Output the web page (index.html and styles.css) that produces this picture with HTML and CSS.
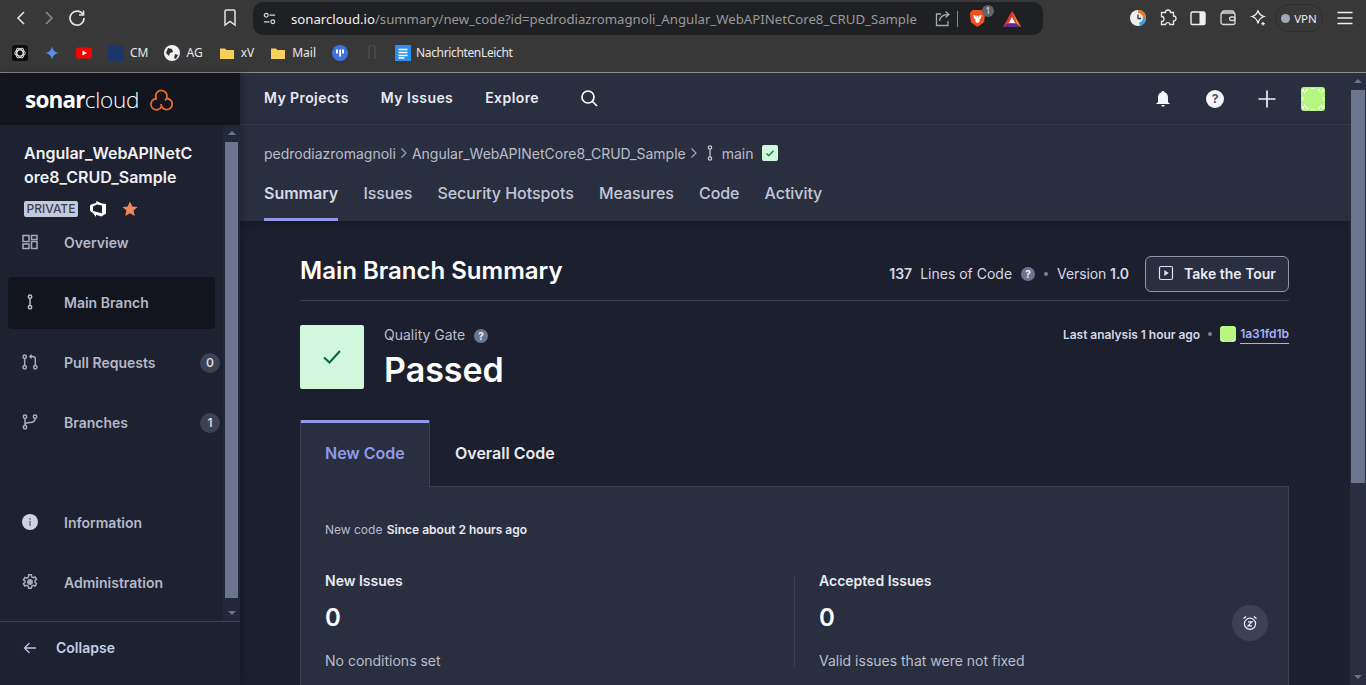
FILE: index.html
```html
<!DOCTYPE html>
<html lang="en">

<head>
  <meta charset="UTF-8">
  <meta name="viewport" content="width=device-width, initial-scale=1.0">
  <title>SonarCloud - Main Branch Summary</title>
  <link rel="stylesheet" href="styles.css">
</head>

<body>
  <!-- browser chrome -->
  <div class="browser">
    <div class="toolbar">
      <svg class="tool-btn" viewBox="0 0 28 28" fill="none" stroke="#e4e4e4" stroke-width="1.6"><path d="M17 8l-6 6 6 6" /></svg>
      <svg class="tool-btn" viewBox="0 0 28 28" fill="none" stroke="#8a8a8a" stroke-width="1.6"><path d="M11 8l6 6-6 6" /></svg>
      <svg class="tool-btn" viewBox="0 0 28 28" fill="none" stroke="#e4e4e4" stroke-width="1.6"><path d="M20 10.5A7 7 0 1 0 21 14" /><path d="M20.5 6.5v4.5H16" /></svg>
      <svg class="tool-btn bookmark-btn" viewBox="0 0 28 28" fill="none" stroke="#e4e4e4" stroke-width="1.5"><path d="M9 7.5a1.5 1.5 0 0 1 1.5-1.5h7a1.5 1.5 0 0 1 1.5 1.5V21l-5-3.5L9 21z" /></svg>
      <div class="address">
        <svg class="site-icon" viewBox="0 0 16 16" fill="none" stroke="#d8d8d8" stroke-width="1.3"><circle cx="4.5" cy="4.5" r="2" /><path d="M8 4.5h6M2 11.5h6" /><circle cx="11.5" cy="11.5" r="2" /></svg>
        <span class="url"><span class="url-host">sonarcloud.io</span>/summary/new_code?id=pedrodiazromagnoli_Angular_WebAPINetCore8_CRUD_Sample</span>
        <svg class="addr-icon share" viewBox="0 0 18 18" fill="none" stroke="#a8a8a8" stroke-width="1.3"><path d="M7 4H2.5v11.5H14V11" /><path d="M5.5 11c.5-4 3.5-6.5 9-6.5M11.5 1.5l3.5 3-3.5 3" /></svg>
        <span class="addr-sep"></span>
        <span class="brave">
          <svg viewBox="0 0 18 20" width="17" height="19"><path fill="#f1501f" d="M4 1h10l3 3-1 10-7 5-7-5L1 4z" /><path fill="#fff" d="M4.500 6l3 1h3l3-1-1 4-1.500 1 .5 2-2.500 2-2.500-2 .5-2-1.500-1z" /><path fill="#f1501f" d="M6.500 8h1.500v1.500zM11.500 8H10v1.500z" /></svg>
          <span class="brave-count">1</span>
        </span>
        <svg class="addr-icon rewards" viewBox="0 0 18 16"><path fill="#e2352e" d="M9 0l9 16H0z" /><path fill="#f08a2c" d="M9 0l9 16h-3z" /><path fill="#5f2a8f" d="M0 16l4-3h10l4 3z" /><path fill="#fff" d="M9 6l3.200 6H5.800z" /></svg>
      </div>
      <div class="tool-right">
        <svg class="ext" viewBox="0 0 18 18"><circle cx="9" cy="9" r="8" fill="#eee" /><path d="M9 1a8 8 0 0 1 8 8h-3a5 5 0 0 0-5-5z" fill="#e8742a" /><path d="M17 9a8 8 0 0 1-6 7.7l-1-3a5 5 0 0 0 4-4.700z" fill="#3aa0d8" /><path d="M9 5.500V9.500h3" fill="none" stroke="#334" stroke-width="1.300" /></svg>
        <svg class="ext" viewBox="0 0 18 18" fill="none" stroke="#e6e6e6" stroke-width="1.300"><path d="M6.500 3.500a2.500 2.500 0 0 1 5 0h3v3.500a2.500 2.500 0 0 1 0 5V15.500h-3.500a2.300 2.300 0 0 0-4.500 0H2.500v-3a2.500 2.500 0 0 0 0-5v-4z" /></svg>
        <svg class="ext" viewBox="0 0 18 18"><rect x="2" y="3" width="14" height="12.500" rx="1.500" fill="none" stroke="#efefef" stroke-width="1.400" /><rect x="10.500" y="3" width="5.500" height="12.500" fill="#efefef" /></svg>
        <svg class="ext" viewBox="0 0 18 18" fill="none" stroke="#dcdcdc" stroke-width="1.300"><rect x="2" y="4" width="14" height="11.500" rx="2" /><path d="M3 4c0-1.500 1-2 2-2h8c1 0 2 .5 2 2" /><rect x="10.500" y="8" width="5.500" height="3.500" rx="1.700" /></svg>
        <svg class="ext" viewBox="0 0 18 18" fill="none" stroke="#eee" stroke-width="1.300"><path d="M9 1.500c.8 3.500 2.500 5 6 6-3.500 1-5.200 2.500-6 7-.8-4.500-2.500-6-6-7 3.500-1 5.200-2.500 6-6z" /><path d="M14 13v3.500M12.300 14.700h3.500" /></svg>
        <div class="vpn"><span class="vpn-dot"></span>VPN</div>
        <svg class="ext menu" viewBox="0 0 18 18" stroke="#efefef" stroke-width="1.400"><path d="M1.500 3.500h15M1.500 9h15M1.500 14.500h15" /></svg>
      </div>
    </div>
    <div class="bookmarks">
      <div class="bm"><svg class="bm-icon" viewBox="0 0 16 16" fill="none"><rect width="16" height="16" rx="3" fill="#0b0b0b" /><g stroke="#ddd" stroke-width="1.100"><ellipse cx="8" cy="8" rx="5.200" ry="3" /><ellipse cx="8" cy="8" rx="5.200" ry="3" transform="rotate(60 8 8)" /><ellipse cx="8" cy="8" rx="5.200" ry="3" transform="rotate(120 8 8)" /></g></svg></div>
      <div class="bm"><svg class="bm-icon" viewBox="0 0 16 16"><path fill="#5b8def" d="M8 1c.6 4 2.500 6.200 7 7-4.500.8-6.400 3-7 7-.6-4-2.500-6.200-7-7 4.500-.8 6.400-3 7-7z" /></svg></div>
      <div class="bm"><svg class="bm-icon" viewBox="0 0 16 16"><rect y="2.500" width="16" height="11" rx="3" fill="#f00" /><path fill="#fff" d="M6.500 5.500v5L11 8z" /></svg></div>
      <div class="bm"><span class="bm-square"></span>CM</div>
      <div class="bm"><svg class="bm-icon" viewBox="0 0 16 16"><circle cx="8" cy="8" r="8" fill="#f2f2f2" /><path fill="#333" d="M4 3l4 1 1 3-3 1-1 3-3-3zM11 9l3 1-2 4-2-1z" /></svg>AG</div>
      <div class="bm"><svg class="bm-icon" viewBox="0 0 16 16"><path fill="#f6cf5c" d="M1 3.500h5l1.500 1.500H15v9H1z" /></svg>xV</div>
      <div class="bm"><svg class="bm-icon" viewBox="0 0 16 16"><path fill="#f6cf5c" d="M1 3.500h5l1.500 1.500H15v9H1z" /></svg>Mail</div>
      <div class="bm"><svg class="bm-icon" viewBox="0 0 16 16"><circle cx="8" cy="8" r="8" fill="#3d73e0" /><path fill="#fff" d="M4 4.500h2v4H4zM7.200 4.500h1.800v7H7.200zM10 4.500h2v4h-2z" /></svg></div>
      <div class="bm"><svg class="bm-icon" viewBox="0 0 16 16" fill="none" stroke="#4c4c4c" stroke-width="1.500"><path d="M5 14V3a3 3 0 0 1 6 0v11" /></svg></div>
      <div class="bm bm-long"><svg class="bm-icon" viewBox="0 0 16 16"><rect width="16" height="16" fill="#2b8ef0" /><path stroke="#fff" stroke-width="1.500" d="M3.500 4.500h9M3.500 7.500h9M3.500 10.500h9M3.500 13h6" /></svg>NachrichtenLeicht</div>
    </div>
  </div>

  <div class="app">
    <!-- left column -->
    <aside class="sidebar">
      <div class="logo-bar">
        <span class="logo-text"><b>sonar</b>cloud</span>
        <svg class="logo-cloud" viewBox="0 0 24 23" fill="none" stroke="#e8692c" stroke-width="1.800"><path d="M7.500 11.200A5.700 5.700 0 1 1 16 12.500" /><path d="M17.700 10.500A5.600 5.600 0 1 1 12 16" /><path d="M12.500 18.500A5.500 5.500 0 1 1 8 10.800" /></svg>
      </div>
      <div class="side-scroll">
        <div class="side-inner">
          <div class="project">
            <h1 class="project-name">Angular_WebAPINetCore8_CRUD_Sample</h1>
            <div class="project-meta">
              <span class="private">PRIVATE</span>
              <svg class="devops" viewBox="0 0 16 16"><path fill="#fff" fill-rule="evenodd" d="M16 3v9.500L11.500 15.500 6 13.800V16L2.500 11.500 1 11 0 9V5l1-1.500L6.200 2V0L12 2.600zM3 5.500v4.500l9 2.300V4.500L7 3.500z" /></svg>
              <svg class="star" viewBox="0 0 16 16"><path fill="#f0875a" d="M8 .5l2.300 5 5.200.6-3.900 3.500 1.100 5.400L8 12.300 3.300 15l1.100-5.400L.5 6.100l5.200-.6z" /></svg>
            </div>
          </div>
          <nav class="side-nav">
            <a class="side-item">
              <svg class="side-icon" viewBox="0 0 16 16" fill="none" stroke="#a6abbd" stroke-width="1.500"><rect x="1" y="1.500" width="6" height="6" /><rect x="9.500" y="1.500" width="5.500" height="4" /><rect x="1" y="10" width="6" height="4.500" /><rect x="9.500" y="7.500" width="5.500" height="7" /></svg>
              Overview
            </a>
            <a class="side-item side-item-active">
              <svg class="side-icon" viewBox="0 0 16 16" fill="none" stroke="#b9bdcc" stroke-width="1.500"><circle cx="8" cy="2.700" r="1.700" /><circle cx="8" cy="13.300" r="1.700" /><path d="M8 4.400v7.200" /></svg>
              Main Branch
            </a>
            <a class="side-item">
              <svg class="side-icon" viewBox="0 0 16 16" fill="none" stroke="#a6abbd" stroke-width="1.500"><circle cx="2.700" cy="2.700" r="1.700" /><circle cx="2.700" cy="13.300" r="1.700" /><circle cx="13.300" cy="13.300" r="1.700" /><path d="M2.700 4.400v7.200M13.300 11.600V5a2.500 2.500 0 0 0-2.500-2.500H8M9.700.8L8 2.500l1.700 1.700" /></svg>
              Pull Requests
              <span class="count">0</span>
            </a>
            <a class="side-item">
              <svg class="side-icon" viewBox="0 0 16 16" fill="none" stroke="#a6abbd" stroke-width="1.500"><circle cx="3" cy="2.700" r="1.700" /><circle cx="3" cy="13.300" r="1.700" /><circle cx="13" cy="2.700" r="1.700" /><path d="M3 4.400v7.200M13 4.400c0 3-2 4-5 4.100-3 .1-5 1-5 3" /></svg>
              Branches
              <span class="count">1</span>
            </a>
            <a class="side-item side-item-spaced">
              <svg class="side-icon" viewBox="0 0 16 16"><circle cx="8" cy="8" r="8" fill="#cdd1e0" /><path fill="#767b90" d="M7.200 7h1.600v5H7.200zM7.200 4h1.600v1.700H7.200z" /></svg>
              Information
            </a>
            <a class="side-item">
              <svg class="side-icon" viewBox="0 0 16 16" fill="none" stroke="#a6abbd" stroke-width="1.500"><path d="M6.700.8h2.600l.4 2 1.600.9 1.900-.7 1.300 2.300-1.500 1.300v1.800l1.500 1.300-1.300 2.300-1.900-.7-1.600.9-.4 2H6.700l-.4-2-1.600-.9-1.900.7-1.300-2.300 1.500-1.300V7.100L1.500 5.800l1.300-2.300 1.900.7 1.600-.9z" /><circle cx="8" cy="8" r="2.200" fill="#a6abbd" /></svg>
              Administration
            </a>
          </nav>
        </div>
        <div class="scrollbar scrollbar-side">
          <span class="arrow-up"></span>
          <span class="thumb thumb-side"></span>
          <span class="arrow-down"></span>
        </div>
      </div>
      <div class="collapse">
        <svg class="collapse-icon" viewBox="0 0 14 14" fill="none" stroke="#b9c8e4" stroke-width="1.300"><path d="M13 7H1.500M6.500 2l-5 5 5 5" /></svg>
        Collapse
      </div>
    </aside>

    <!-- right column -->
    <div class="main">
      <header class="topbar">
        <a class="top-link">My Projects</a>
        <a class="top-link">My Issues</a>
        <a class="top-link">Explore</a>
        <svg class="search" viewBox="0 0 18 18" fill="none" stroke="#fff" stroke-width="1.700"><circle cx="8" cy="8" r="6" /><path d="M12.500 12.500l4.500 4.500" /></svg>
        <div class="top-right">
          <svg class="top-icon" viewBox="0 0 18 18"><path fill="#f4f6fb" d="M9 1c.9 0 1.500.6 1.500 1.300C13 3 14 5 14 7.500V12l2 2H2l2-2V7.500C4 5 5 3 7.500 2.300 7.500 1.600 8.100 1 9 1zM7.300 15h3.400a1.700 1.700 0 0 1-3.400 0z" /></svg>
          <span class="help-big">?</span>
          <svg class="top-icon" viewBox="0 0 18 18" stroke="#eef0f6" stroke-width="1.700"><path d="M9 .5v17M.5 9h17" /></svg>
          <svg class="avatar" viewBox="0 0 24 24"><rect width="24" height="24" rx="3" fill="#b6f57f" /><path fill="#eafcdc" d="M1 2h2v2h2V2h3v1H6v2H4v2H3V5H1zM23 2h-2v2h-2V2h-3v1h2v2h2v2h1V5h2zM1 22h2v-2h2v2h3v-1H6v-2H4v-2H3v2H1zM23 22h-2v-2h-2v2h-3v-1h2v-2h2v-2h1v2h2zM1 10h2v1H2v3H1zM23 10h-2v1h1v3h1zM10 1h4v1h-4zM10 22h4v1h-4z" /></svg>
        </div>
      </header>

      <section class="project-head">
        <div class="crumbs">
          <span>pedrodiazromagnoli</span>
          <svg class="crumb-sep" viewBox="0 0 8 12" fill="none" stroke="#a6abbd" stroke-width="1.100"><path d="M1.500 1.500L6 6l-4.500 4.500" /></svg>
          <span>Angular_WebAPINetCore8_CRUD_Sample</span>
          <svg class="crumb-sep" viewBox="0 0 8 12" fill="none" stroke="#a6abbd" stroke-width="1.100"><path d="M1.500 1.500L6 6l-4.500 4.500" /></svg>
          <svg class="crumb-branch" viewBox="0 0 8 16" fill="none" stroke="#c9cdda" stroke-width="1.200"><circle cx="4" cy="2.500" r="1.700" /><circle cx="4" cy="13.500" r="1.700" /><path d="M4 4.200v7.600" /></svg>
          <span>main</span>
          <span class="crumb-ok"><svg viewBox="0 0 10 10" fill="none" stroke="#0a7a3e" stroke-width="1.300" width="10" height="10"><path d="M1.500 5.500l2.300 2.200 4.700-5" /></svg></span>
        </div>
        <nav class="project-tabs">
          <a class="project-tab project-tab-active">Summary</a>
          <a class="project-tab">Issues</a>
          <a class="project-tab">Security Hotspots</a>
          <a class="project-tab">Measures</a>
          <a class="project-tab">Code</a>
          <a class="project-tab">Activity</a>
        </nav>
      </section>

      <div class="scroll-area">
        <main class="content">
          <div class="summary-head">
            <h2 class="summary-title">Main Branch Summary</h2>
            <div class="summary-meta">
              <b class="loc">137</b>
              <span class="loc-label">Lines of Code</span>
              <span class="help-small">?</span>
              <span class="dot"></span>
              <span class="version-label">Version <b class="version">1.0</b></span>
              <button class="tour" type="button">
                <svg viewBox="0 0 16 16" width="16" height="16" fill="none" stroke="#dfe2ec" stroke-width="1.200"><rect x="1.500" y="1.500" width="13" height="13" rx="1.500" /><path d="M6.300 5v6l4.500-3z" fill="#dfe2ec" stroke="none" /></svg>
                Take the Tour
              </button>
            </div>
          </div>

          <div class="gate-row">
            <div class="gate-box"><svg viewBox="0 0 20 16" width="20" height="16" fill="none" stroke="#0b6b3a" stroke-width="2.200"><path d="M2 8.500l5.500 5L18 2" /></svg></div>
            <div class="gate-text">
              <div class="gate-label">Quality Gate <span class="help-small">?</span></div>
              <div class="gate-value">Passed</div>
            </div>
            <div class="analysis">
              <span>Last analysis 1 hour ago</span>
              <span class="dot"></span>
              <svg class="avatar-small" viewBox="0 0 16 16"><rect width="16" height="16" rx="3" fill="#b6f57f" /><path fill="#d8f9bd" d="M1 1h3v1H2v2H1zM12 1h3v3h-1V2h-2zM1 12h1v2h2v1H1zM14 12h1v3h-3v-1h2z" /></svg>
              <a class="commit">1a31fd1b</a>
            </div>
          </div>

          <div class="code-tabs">
            <a class="code-tab code-tab-active">New Code</a>
            <a class="code-tab">Overall Code</a>
          </div>

          <div class="panel">
            <p class="since">New code <b>Since about 2 hours ago</b></p>
            <div class="measures">
              <div class="measure">
                <div class="measure-label">New Issues</div>
                <div class="measure-value">0</div>
                <div class="measure-note">No conditions set</div>
              </div>
              <div class="measure measure-right">
                <div>
                  <div class="measure-label">Accepted Issues</div>
                  <div class="measure-value">0</div>
                  <div class="measure-note">Valid issues that were not fixed</div>
                </div>
                <span class="alarm">
                  <svg viewBox="0 0 16 16" width="16" height="16" fill="none" stroke="#f0f2f8" stroke-width="1.200"><circle cx="8" cy="8.800" r="5.600" /><path d="M1.500 3.500l2.500-2M14.500 3.500l-2.500-2" /><path d="M6 6.800h4l-4 4h4" /></svg>
                </span>
              </div>
            </div>
          </div>
        </main>
        <div class="scrollbar scrollbar-page">
          <span class="arrow-up"></span>
          <span class="thumb thumb-page"></span>
          <span class="arrow-down"></span>
        </div>
      </div>
    </div>
  </div>
</body>

</html>
```

FILE: styles.css
```css
* {
  box-sizing: border-box;
}

html,
body {
  height: 100%;
}

body {
  margin: 0;
  overflow: hidden;
  display: flex;
  flex-direction: column;
  font-family: Inter, "Liberation Sans", sans-serif;
  background-color: #1c1f2e;
  color: #e8eaf2;
}

/* browser chrome */
.browser {
  height: 73px;
  flex: none;
  background-color: #383838;
  border-bottom: 1px solid #8a8a8a;
  font-family: "Noto Sans", "Liberation Sans", sans-serif;
}

.toolbar {
  height: 36px;
  display: flex;
  align-items: center;
  padding-left: 7px;
}

.tool-btn {
  width: 28px;
  height: 28px;
  flex: none;
}

.bookmark-btn {
  margin-left: 125px;
}

.address {
  width: 790px;
  height: 33px;
  margin-left: 9px;
  margin-top: 1px;
  padding: 0 17px 0 9px;
  display: flex;
  align-items: center;
  background-color: #1f2023;
  border-radius: 10px;
}

.site-icon {
  width: 15px;
  height: 15px;
  flex: none;
}

.url {
  margin-left: 14px;
  font-size: 13.2px;
  color: #9a9a9a;
  white-space: nowrap;
  width: 626px;
  flex: none;
}

.url-host {
  color: #f2f2f2;
}

.addr-icon {
  flex: none;
}

.share {
  width: 18px;
  height: 18px;
  margin-left: 17px;
}

.addr-sep {
  width: 1px;
  height: 16px;
  margin-left: 5px;
  background-color: #8a8a8a;
}

.brave {
  display: flex;
  margin-left: 11px;
  position: relative;
}

.brave-count {
  position: absolute;
  top: -4px;
  right: -8px;
  width: 12px;
  height: 12px;
  border-radius: 50%;
  background-color: #62646c;
  color: #e8e8e8;
  font-size: 8px;
  line-height: 12px;
  text-align: center;
}

.rewards {
  width: 18px;
  height: 16px;
  margin-left: 17px;
}

.tool-right {
  margin-left: 86px;
  display: flex;
  align-items: center;
}

.ext {
  width: 18px;
  height: 18px;
  flex: none;
  margin-right: 12px;
}

.vpn {
  width: 48px;
  height: 28px;
  margin-left: -4px;
  display: flex;
  align-items: center;
  justify-content: center;
  gap: 4px;
  border: 1px solid #2d2d2d;
  border-radius: 14px;
  font-size: 11.5px;
  color: #ececec;
}

.vpn-dot {
  width: 9px;
  height: 9px;
  border-radius: 50%;
  background-color: #a0a6b8;
}

.menu {
  margin: 0 0 0 13px;
}

.bookmarks {
  height: 34px;
  padding-left: 12px;
  display: flex;
  align-items: center;
  gap: 16px;
  font-size: 12px;
  line-height: 16px;
  color: #e8e8e8;
}

.bm {
  display: flex;
  align-items: center;
  gap: 6px;
}

.bm-long {
  gap: 5px;
  margin-left: -1px;
  letter-spacing: -0.35px;
}

.bm-icon {
  width: 16px;
  height: 16px;
  flex: none;
}

.bm-square {
  width: 16px;
  height: 16px;
  background-color: #1b3768;
}

/* app frame */
.app {
  flex: 1;
  min-height: 0;
  display: flex;
}

.sidebar {
  width: 240px;
  flex: none;
  display: flex;
  flex-direction: column;
  background-color: #1e2130;
  box-shadow: 2px 0 8px rgba(0, 0, 0, 0.25);
  z-index: 2;
}

.logo-bar {
  height: 52px;
  flex: none;
  padding-left: 25px;
  display: flex;
  align-items: center;
  gap: 10px;
  background-color: #12151e;
}

.logo-text {
  font-family: "Open Sans", "Liberation Sans", sans-serif;
  font-size: 22.5px;
  font-weight: 300;
  letter-spacing: -0.25px;
  color: #fff;
}

.logo-text b {
  font-weight: 700;
  letter-spacing: -0.8px;
}

.logo-cloud {
  width: 24px;
  height: 23px;
}

.side-scroll {
  flex: 1;
  min-height: 0;
  display: flex;
  border-bottom: 1px solid #3c4154;
}

.side-inner {
  flex: 1;
  min-width: 0;
}

.project {
  padding: 16px 26px 0 24px;
}

.project-name {
  margin: 0;
  font-size: 16px;
  line-height: 24px;
  font-weight: 600;
  color: #eef0f6;
  word-break: break-all;
}

.project-meta {
  height: 16px;
  margin-top: 12px;
  display: flex;
  align-items: center;
}

.private {
  height: 16px;
  padding: 0 2.5px;
  background-color: #c5cadb;
  border-radius: 2px;
  color: #3a3f52;
  font-size: 12px;
  line-height: 16px;
  font-weight: 500;
}

.devops {
  width: 16px;
  height: 16px;
  margin-left: 12px;
}

.star {
  width: 16px;
  height: 16px;
  margin-left: 16px;
}

.side-nav {
  padding: 0 0 0 8px;
}

.side-item {
  width: 207px;
  height: 52px;
  margin-bottom: 8px;
  padding: 0 0 2px 14px;
  display: flex;
  align-items: center;
  font-size: 14px;
  font-weight: 600;
  color: #b4b8c8;
  border-radius: 4px;
  white-space: nowrap;
}

.side-item-active {
  background-color: #12151e;
}

.side-item-spaced {
  margin-top: 48px;
}

.side-icon {
  width: 16px;
  height: 16px;
  flex: none;
  margin-right: 26px;
}

.count {
  width: 20px;
  height: 20px;
  margin: 2px -5px 0 auto;
  border-radius: 50%;
  background-color: #3c4154;
  color: #d5d8e4;
  font-size: 12px;
  line-height: 20px;
  text-align: center;
  flex: none;
}

/* fake scrollbars, the screenshot shows the native ones */
.scrollbar {
  flex: none;
  display: flex;
  flex-direction: column;
  align-items: center;
  width: 17px;
  background-color: #23273a;
}

.arrow-up,
.arrow-down {
  width: 0;
  height: 0;
  flex: none;
  border-left: 4px solid transparent;
  border-right: 4px solid transparent;
}

.arrow-up {
  margin-top: 6px;
  border-bottom: 4px solid #6b7590;
}

.arrow-down {
  margin-top: auto;
  margin-bottom: 6px;
  border-top: 4px solid #6b7590;
}

.thumb {
  width: 13px;
  background-color: #6b7590;
}

.thumb-side {
  height: 456px;
  margin-top: 7px;
}

.thumb-page {
  height: 393px;
  margin-top: 7px;
  width: 14px;
}

.scrollbar-page {
  width: 16px;
  margin-top: -148px;
  background-color: #2a2f40;
  z-index: 3;
}

.collapse {
  height: 63px;
  flex: none;
  padding: 0 0 12px 23px;
  display: flex;
  align-items: center;
  gap: 19px;
  font-size: 14px;
  font-weight: 600;
  color: #c3cfe6;
}

.collapse-icon {
  width: 14px;
  height: 14px;
}

/* main column */
.main {
  flex: 1;
  min-width: 0;
  display: flex;
  flex-direction: column;
}

.topbar {
  height: 52px;
  flex: none;
  padding: 0 41px 0 24px;
  display: flex;
  align-items: center;
  gap: 32px;
  background-color: #2a2f40;
  border-bottom: 1px solid #3c4154;
}

.top-link {
  padding-bottom: 3px;
  font-size: 14px;
  font-weight: 600;
  letter-spacing: 0.42px;
  color: #e8eaf5;
}

.search {
  width: 18px;
  height: 18px;
  margin-left: 9px;
  margin-bottom: 1px;
}

.top-right {
  margin-left: auto;
  display: flex;
  align-items: center;
}

.top-icon {
  width: 18px;
  height: 18px;
  flex: none;
}

.help-big {
  width: 18px;
  height: 18px;
  margin: 0 34px;
  border-radius: 50%;
  background-color: #f4f6fb;
  color: #4a5068;
  font-size: 12px;
  font-weight: 700;
  line-height: 18px;
  text-align: center;
}

.avatar {
  width: 24px;
  height: 24px;
  margin-left: 25px;
}

.project-head {
  height: 96px;
  flex: none;
  padding: 16px 24px 0;
  margin-right: 16px;
  background-color: #2a2f40;
  box-shadow: 0 2px 10px rgba(0, 0, 0, 0.3);
  z-index: 1;
}

.crumbs {
  height: 24px;
  display: flex;
  align-items: center;
  font-size: 14px;
  color: #b9bdcc;
}

.crumb-sep {
  width: 8px;
  height: 12px;
  margin: 0 4px 0 4px;
}

.crumb-branch {
  width: 8px;
  height: 16px;
  margin: 0 8px 0 4px;
}

.crumb-ok {
  width: 16px;
  height: 16px;
  margin-left: 8px;
  display: flex;
  align-items: center;
  justify-content: center;
  background-color: #d1f7dd;
  border-radius: 2px;
}

.project-tabs {
  margin-top: 16px;
  display: flex;
  gap: 25.2px;
}

.project-tab {
  height: 40px;
  font-size: 16px;
  line-height: 24px;
  font-weight: 500;
  letter-spacing: -0.06px;
  color: #c3c7d6;
  border-bottom: 3px solid transparent;
}

.project-tab-active {
  font-weight: 600;
  letter-spacing: 0;
  color: #d5d8e4;
  border-bottom-color: #9199ea;
}

.scroll-area {
  flex: 1;
  min-height: 0;
  display: flex;
  background-color: #1c1f2e;
}

.content {
  flex: 1;
  min-width: 0;
  padding: 0 61px 0 60px;
  overflow: hidden;
}

.summary-head {
  height: 80px;
  padding: 35px 0 8px;
  display: flex;
  align-items: center;
  justify-content: space-between;
  border-bottom: 1px solid #3c4154;
}

.summary-title {
  margin: 0 0 8px;
  font-size: 24px;
  font-weight: 600;
  color: #fff;
}

.summary-meta {
  display: flex;
  align-items: center;
  font-size: 14px;
  color: #d5d8e4;
}

.loc {
  font-weight: 600;
  margin: 0 8px 2px 0;
}

.loc-label,
.version-label {
  margin-bottom: 2px;
}

.version {
  font-weight: 600;
}

.version-label {
  letter-spacing: -0.1px;
}

.help-small {
  display: inline-block;
  width: 14px;
  height: 14px;
  margin-left: 5px;
  border-radius: 50%;
  background-color: #6b7590;
  color: #eef0f6;
  font-size: 10px;
  font-weight: 700;
  line-height: 14px;
  text-align: center;
}

.summary-meta .help-small {
  margin-left: 9px;
}

.dot {
  width: 4px;
  height: 4px;
  margin: 0 9px;
  border-radius: 50%;
  background-color: #7b8296;
  flex: none;
}

.tour {
  width: 144px;
  height: 36px;
  margin-left: 16px;
  padding: 0 0 2px;
  display: flex;
  align-items: center;
  justify-content: center;
  gap: 10px;
  background-color: #2a2f40;
  border: 1px solid #9095a8;
  border-radius: 6px;
  font-family: inherit;
  font-size: 14px;
  font-weight: 600;
  color: #e8eaf2;
}

.gate-row {
  display: flex;
  margin-top: 24px;
  height: 64px;
}

.gate-box {
  width: 64px;
  height: 64px;
  display: flex;
  align-items: center;
  justify-content: center;
  background-color: #d1f7dd;
  border-radius: 2px;
}

.gate-text {
  margin-left: 20px;
}

.gate-label {
  font-size: 14px;
  line-height: 20px;
  color: #b9bdcc;
}

.gate-value {
  margin-top: 5px;
  font-size: 34px;
  line-height: 40px;
  font-weight: 600;
  color: #fff;
}

.analysis {
  margin-left: auto;
  height: 18px;
  display: flex;
  align-items: center;
  font-size: 12px;
  font-weight: 600;
  letter-spacing: -0.03px;
  color: #d5d8e4;
}

.analysis .dot {
  margin: 0 8px;
}

.avatar-small {
  width: 16px;
  height: 16px;
  margin-right: 4px;
}

.commit {
  color: #a5b2f5;
  border-bottom: 1px solid #a5b2f5;
  line-height: 18px;
}

.code-tabs {
  margin-top: 31px;
  height: 67px;
  display: flex;
  align-items: stretch;
  border-bottom: 1px solid #3c4154;
}

.code-tab {
  padding: 0 25px;
  display: flex;
  align-items: center;
  font-size: 16px;
  font-weight: 600;
  color: #e8eaf2;
  white-space: nowrap;
}

.code-tab-active {
  width: 130px;
  margin-bottom: -1px;
  padding: 0 0 4px 24px;
  background-color: #2a2f40;
  border: 1px solid #3c4154;
  border-top: 3px solid #9199ea;
  border-bottom: none;
  border-radius: 2px 2px 0 0;
  color: #8f9ae8;
}

.panel {
  padding: 34px 20px 40px 24px;
  background-color: #2a2f40;
  border: 1px solid #3c4154;
  border-top: none;
}

.since {
  margin: 0;
  font-size: 12px;
  line-height: 18px;
  color: #b9bdcc;
}

.since b {
  margin-left: 1px;
  font-weight: 600;
  color: #e8eaf2;
}

.measures {
  margin-top: 36px;
  display: flex;
}

.measure {
  width: 469px;
  height: 92px;
  flex: none;
}

.measure-right {
  flex: 1;
  width: auto;
  padding-left: 24px;
  display: flex;
  justify-content: space-between;
  align-items: flex-start;
  border-left: 1px solid #3c4154;
}

.measure-label {
  font-size: 14px;
  line-height: 12px;
  font-weight: 600;
  color: #e8eaf2;
}

.measure-value {
  margin-top: 14px;
  font-size: 24px;
  line-height: 33px;
  font-weight: 600;
  color: #fff;
}

.measure-note {
  margin-top: 19px;
  font-size: 14px;
  line-height: 16px;
  color: #b9bdcc;
}

.alarm {
  width: 36px;
  height: 36px;
  margin-top: 30px;
  display: flex;
  align-items: center;
  justify-content: center;
  border-radius: 50%;
  background-color: #3c4154;
}
```
